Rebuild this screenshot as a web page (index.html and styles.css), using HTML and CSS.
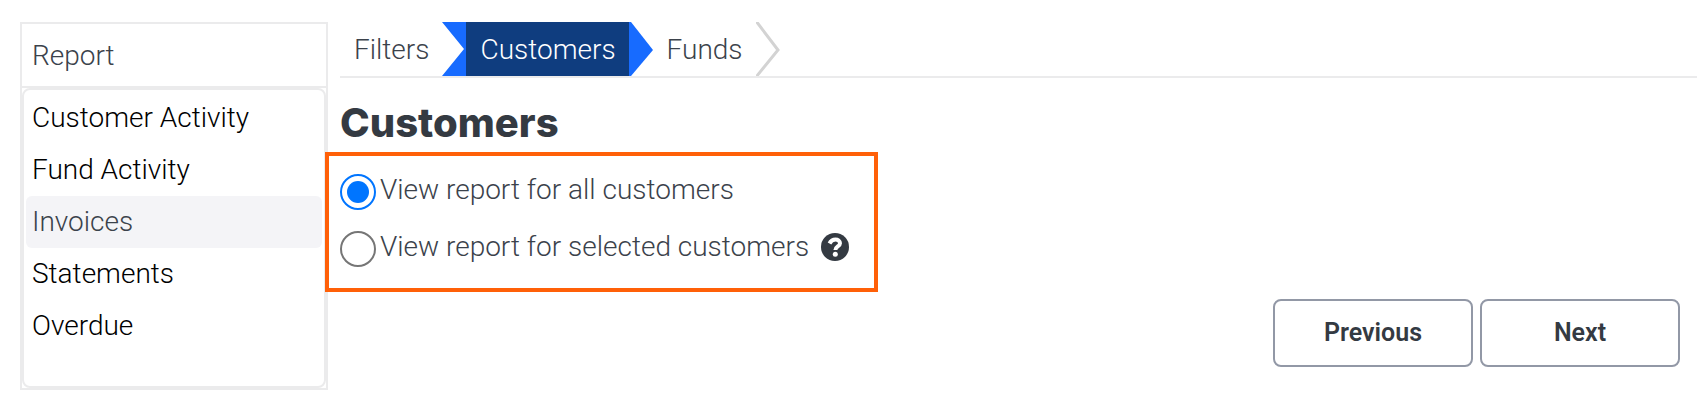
FILE: index.html
```html
<!DOCTYPE html>
<html lang="en">
  <head>
    <meta charset="utf-8">
    <meta name="viewport" content="width=device-width, initial-scale=1">
    <title>Customers</title>
    <link rel="stylesheet" href="styles.css">
  </head>
  <body>
    <div class="page">
      <aside class="sidebar">
        <label class="sidebar-title" for="report">Report</label>
        <select id="report" class="reports" size="5">
          <option>Customer Activity</option>
          <option>Fund Activity</option>
          <option selected>Invoices</option>
          <option>Statements</option>
          <option>Overdue</option>
        </select>
      </aside>
      <main class="content">
        <nav class="steps">
          <a class="step" href="#">Filters</a>
          <svg class="arrow" viewBox="0 0 24 54"><path fill="#176bff" d="M0 0h24v54H0l22-27z"/></svg>
          <a class="step active" href="#">Customers</a>
          <svg class="arrow" viewBox="0 0 24 54"><path fill="#176bff" d="M0 0h2l22 28L2 54H0z"/></svg>
          <a class="step" href="#">Funds</a>
          <svg class="arrow" viewBox="0 0 24 54"><path fill="none" stroke="#d3d3d3" stroke-width="3" d="M0-1l22 29L0 55"/></svg>
        </nav>
        <form class="form">
          <h1>Customers</h1>
          <fieldset class="choices">
            <div class="choice">
              <input id="all" type="radio" name="scope" checked>
              <label for="all">View report for all customers</label>
            </div>
            <div class="choice">
              <input id="selected" type="radio" name="scope">
              <label for="selected">View report for selected customers</label>
              <svg class="help" viewBox="0 0 28 28">
                <circle cx="14" cy="14" r="14" fill="#343a42"/>
                <path fill="none" stroke="#fff" stroke-width="4" d="M8.500 10.500C10 7.500 12 6.500 14.500 6.500c2.500 0 4.500 1.500 4.500 3.700 0 3.300-4.600 3.200-4.600 6.800"/>
                <circle cx="14.300" cy="21.200" r="2.500" fill="#fff"/>
              </svg>
            </div>
          </fieldset>
          <div class="buttons">
            <button type="button">Previous</button>
            <button type="button">Next</button>
          </div>
        </form>
      </main>
    </div>
  </body>
</html>
```

FILE: styles.css
```css
* {
  box-sizing: border-box;
}

body {
  margin: 0;
  background: #fff;
  color: #3b424b;
  font: 300 28px/36px Roboto, sans-serif;
}

.page {
  display: flex;
  align-items: flex-start;
  gap: 12px;
  padding: 22px 0 18px 20px;
}

.sidebar {
  flex: 0 0 308px;
  border: 2px solid #ebebec;
}

.sidebar-title {
  display: block;
  padding: 14px 10px 12px;
  border-bottom: 2px solid #ebebec;
}

.reports {
  display: block;
  width: 100%;
  height: 300px;
  padding: 2px;
  border: 2px solid #ebebec;
  border-radius: 8px;
  background: #fff;
  color: #000;
  font: inherit;
  outline: none;
  overflow: hidden;
}

.reports option {
  min-height: 52px;
  padding: 9px 6px 10px;
  border-radius: 6px;
  font-weight: 300;
}

.reports option:checked {
  background: #f4f4f7 linear-gradient(#f4f4f7, #f4f4f7);
  color: #3b424b;
}

.content {
  flex: 1;
}

.steps {
  display: flex;
  border-bottom: 2px solid #ebebec;
}

.step {
  padding: 10px 13px 8px 14px;
  color: inherit;
  text-decoration: none;
}

.step.active {
  background: #0f3d7f;
  color: #fff;
}

.arrow {
  width: 24px;
  height: 54px;
}

h1 {
  margin: 20px 0 4px;
  color: #343a42;
  font: 800 40px/50px Inter, sans-serif;
}

/* the frame reaches over the edge of the sidebar */
.choices {
  position: relative;
  display: grid;
  gap: 17px;
  width: fit-content;
  margin: 0 0 0 -15px;
  padding: 16px 25px 19px 11px;
  border: 4px solid #ff6008;
}

.choice {
  display: flex;
  align-items: center;
}

.choice label {
  padding-bottom: 4px;
}

.choice input {
  appearance: none;
  display: grid;
  place-items: center;
  width: 36px;
  height: 36px;
  margin: 0 4px 0 0;
  border: 2px solid #767676;
  border-radius: 50%;
}

.choice input:checked {
  border-color: #0075ff;
}

.choice input:checked::before {
  content: "";
  width: 22px;
  height: 22px;
  border-radius: 50%;
  background: #0075ff;
}

.help {
  width: 28px;
  height: 32px;
  margin-left: 12px;
  padding-bottom: 4px;
}

.buttons {
  display: flex;
  justify-content: flex-end;
  gap: 7px;
  padding: 7px 17px 0 0;
}

.buttons button {
  width: 200px;
  height: 68px;
  border: 2px solid #9298a6;
  border-radius: 8px;
  background: #fff;
  color: #343a42;
  font: 600 25px/32px Roboto, sans-serif;
}
```
